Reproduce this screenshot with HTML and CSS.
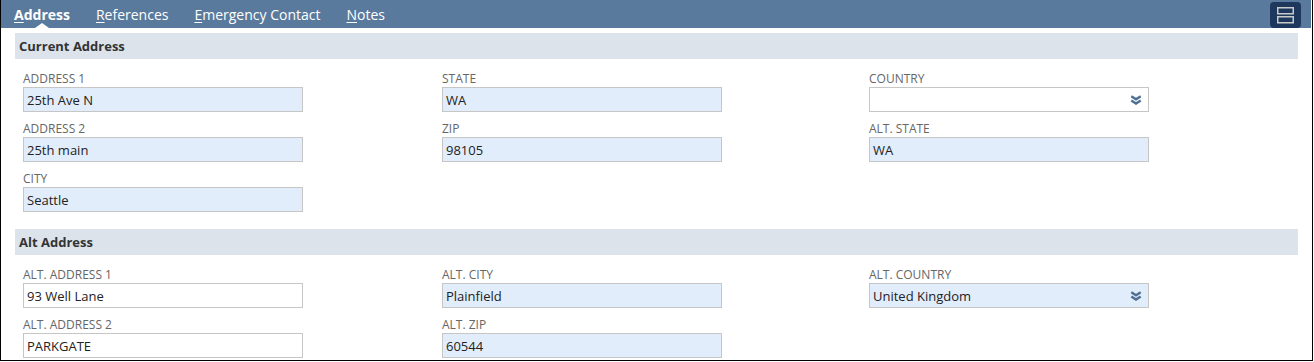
FILE: index.html
```html
<!DOCTYPE html>
<html>
<head>
<meta charset="utf-8">
<link rel="stylesheet" href="styles.css">
</head>
<body>
<div class="frame">
  <div class="tabbar">
    <nav class="tabs">
      <span class="tab active"><u>A</u>ddress</span>
      <span class="tab"><u>R</u>eferences</span>
      <span class="tab"><u>E</u>mergency Contact</span>
      <span class="tab"><u>N</u>otes</span>
    </nav>
    <button class="menu-btn" type="button" aria-label="Layout">
      <svg width="17" height="17" viewBox="0 0 17 17">
        <rect x="0.75" y="0.75" width="15.5" height="6" fill="none" stroke="#c9c9c9" stroke-width="1.5"/>
        <rect x="0.75" y="9.75" width="15.5" height="6" fill="none" stroke="#c9c9c9" stroke-width="1.5"/>
      </svg>
    </button>
  </div>

  <div class="section-title">Current Address</div>
  <div class="section-body">
    <div class="col">
      <div class="field"><div class="label">Address 1</div><div class="input filled">25th Ave N</div></div>
      <div class="field"><div class="label">Address 2</div><div class="input filled">25th main</div></div>
      <div class="field"><div class="label">City</div><div class="input filled">Seattle</div></div>
    </div>
    <div class="col">
      <div class="field"><div class="label">State</div><div class="input filled">WA</div></div>
      <div class="field"><div class="label">Zip</div><div class="input filled">98105</div></div>
    </div>
    <div class="col">
      <div class="field"><div class="label">Country</div>
        <div class="input select"><span></span>
          <svg class="chev" width="12" height="10" viewBox="0 0 12 10"><path d="M1.3 1.3 L6 4.3 L10.7 1.3 M1.3 5.5 L6 8.5 L10.7 5.5" fill="none" stroke="#4e6f93" stroke-width="2.4"/></svg>
        </div>
      </div>
      <div class="field"><div class="label">Alt. State</div><div class="input filled">WA</div></div>
    </div>
  </div>

  <div class="section-title">Alt Address</div>
  <div class="section-body last">
    <div class="col">
      <div class="field"><div class="label">Alt. Address 1</div><div class="input">93 Well Lane</div></div>
      <div class="field"><div class="label">Alt. Address 2</div><div class="input">PARKGATE</div></div>
    </div>
    <div class="col">
      <div class="field"><div class="label">Alt. City</div><div class="input filled">Plainfield</div></div>
      <div class="field"><div class="label">Alt. Zip</div><div class="input filled">60544</div></div>
    </div>
    <div class="col">
      <div class="field"><div class="label">Alt. Country</div>
        <div class="input select filled"><span>United Kingdom</span>
          <svg class="chev" width="12" height="10" viewBox="0 0 12 10"><path d="M1.3 1.3 L6 4.3 L10.7 1.3 M1.3 5.5 L6 8.5 L10.7 5.5" fill="none" stroke="#4e6f93" stroke-width="2.4"/></svg>
        </div>
      </div>
    </div>
  </div>
</div>
</body>
</html>
```

FILE: styles.css
```css
* { box-sizing: border-box; }

body {
  margin: 0;
  background: #fff;
  font-family: "Open Sans", "Noto Sans", "Liberation Sans", sans-serif;
}

.frame {
  width: 1313px;
  height: 361px;
  border: 1px solid #000;
  border-top: 0;
  overflow: hidden;
  background: #fff;
}

.tabbar {
  height: 28px;
  margin-right: 1px;
  background: #597a9c;
  display: flex;
  align-items: flex-start;
  justify-content: space-between;
}

.tabs {
  display: flex;
}

.tab {
  position: relative;
  padding: 2px 13px 0;
  line-height: 26px;
  font-size: 14px;
  color: #fff;
}

.tab u {
  text-decoration-thickness: 1px;
  text-underline-offset: 2px;
}

.tab.active {
  font-weight: 700;
}

.tab.active::after {
  content: "";
  position: absolute;
  left: 50%;
  bottom: 0;
  margin-left: -7px;
  border-left: 7px solid transparent;
  border-right: 7px solid transparent;
  border-bottom: 5px solid #fff;
}

.menu-btn {
  margin: 2px 10px 0 0;
  width: 31px;
  height: 26px;
  border: 0;
  border-radius: 4px;
  background: #1d385c;
  padding: 0;
  display: flex;
  align-items: center;
  justify-content: center;
}

.section-title {
  margin: 5px 14px 0;
  height: 26px;
  padding-left: 4px;
  background: #dce3eb;
  font-size: 13px;
  font-weight: 700;
  color: #333;
  line-height: 26px;
}

.section-body + .section-title {
  margin-top: 0;
}

.section-body {
  display: grid;
  grid-template-columns: 419px 427px 280px;
  padding: 12px 0 17px 22px;
}

.col {
  display: flex;
  flex-direction: column;
  gap: 9px;
}

.field {
  width: 280px;
}

.label {
  height: 16px;
  font-size: 12px;
  line-height: 16px;
  color: #666;
  text-transform: uppercase;
}

.input {
  height: 25px;
  border: 1px solid #c6c6c6;
  background: #fff;
  padding: 2px 3px 0;
  font-size: 13px;
  line-height: 21px;
  color: #222;
  white-space: nowrap;
}

.input.filled {
  background: #e2edfb;
}

.input.select {
  display: flex;
  align-items: center;
  justify-content: space-between;
  padding: 0 6px 0 3px;
}

.input.select span {
  padding-top: 2px;
}

.chev {
  display: block;
  margin-top: 1px;
}
```
